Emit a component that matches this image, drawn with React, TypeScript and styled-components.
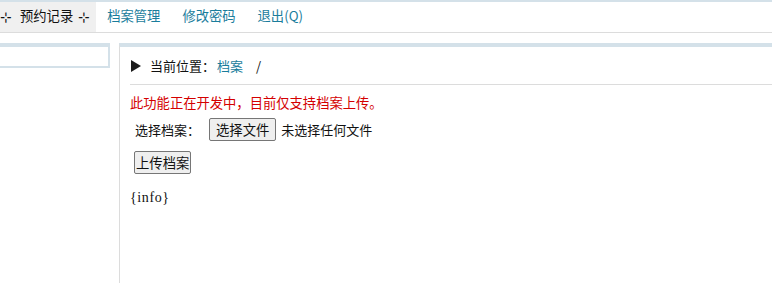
import React from "react";
import styled, { createGlobalStyle } from "styled-components";

const GlobalStyle = createGlobalStyle`
  html, body {
    margin: 0;
    padding: 0;
    background: #fff;
  }
  body {
    font-family: "Noto Sans CJK SC", "Noto Sans", sans-serif;
    font-size: 13px;
    color: #111;
  }
`;

const Page = styled.div`
  width: 772px;
  height: 283px;
  overflow: hidden;
  display: flex;
  flex-direction: column;
`;

const NavBar = styled.nav`
  display: flex;
  align-items: stretch;
  height: 30px;
  border-top: 2px solid #d4e1e9;
  border-bottom: 1px solid #dcdcdc;
`;

const NavItem = styled.a<{ $active?: boolean }>`
  display: flex;
  align-items: center;
  padding: ${(p) => (p.$active ? "0 6px 3px 0" : "0 11px 3px")};
  background: ${(p) => (p.$active ? "#f0f0f0" : "transparent")};
  color: ${(p) => (p.$active ? "#111" : "#1a7d9c")};
  font-size: 13.3px;
  text-decoration: none;
  white-space: pre;
  cursor: pointer;
`;

const Star = styled.span`
  font-size: 14px;
  margin: 0 8px 0 0;

  &:last-child {
    margin: 0 0 0 5px;
  }
`;

const Body = styled.div`
  flex: 1;
  display: flex;
  align-items: flex-start;
  gap: 9px;
  margin-top: 10px;
  min-height: 0;
`;

const SideBox = styled.div`
  width: 108px;
  height: 19px;
  border: 2px solid #d4e1e9;
  border-top-width: 4px;
  border-left: 0;
`;

const Main = styled.section`
  flex: 1;
  align-self: stretch;
  border-top: 4px solid #d4e1e9;
  border-left: 1px solid #dcdcdc;
  padding-left: 10px;
`;

const Crumb = styled.div`
  display: flex;
  align-items: center;
  height: 37px;
  padding-left: 1px;
  gap: 9px;
  border-bottom: 1px solid #dcdcdc;
`;

const Arrow = styled.span`
  width: 0;
  height: 0;
  border-top: 6px solid transparent;
  border-bottom: 6px solid transparent;
  border-left: 10px solid #1c1c1c;
`;

const CrumbLink = styled.a`
  color: #1a7d9c;
  margin: 0 13px 0 2px;
  text-decoration: none;
`;

const Notice = styled.p`
  margin: 9px 0 0;
  color: #d40000;
  font-size: 13.3px;
  line-height: 18px;
`;

const FieldRow = styled.div`
  display: flex;
  align-items: center;
  margin-top: 6px;
  padding-left: 5px;
`;

const FieldLabel = styled.span`
  width: 74px;
`;

const NativeButton = styled.button<{ $tight?: boolean }>`
  font-family: "Noto Sans CJK SC", "Noto Sans", sans-serif;
  font-size: 13.33px;
  color: #111;
  background: #efefef;
  border: 1px solid #767676;
  border-radius: 2px;
  padding: ${(p) => (p.$tight ? "1px 1px" : "1px 6px")};
  line-height: 19px;
  cursor: pointer;
`;

const FileName = styled.span`
  margin-left: 5px;
`;

const UploadRow = styled.div`
  margin-top: 10px;
  padding-left: 4px;
`;

const Info = styled.div`
  margin-top: 16px;
  font-family: "Liberation Serif", "DejaVu Serif", serif;
  font-size: 14px;
  letter-spacing: 0.6px;
`;

export default function App() {
  return (
    <Page>
      <GlobalStyle />
      <NavBar>
        <NavItem $active>
          <Star>⊹</Star>预约记录<Star>⊹</Star>
        </NavItem>
        <NavItem>档案管理</NavItem>
        <NavItem>修改密码</NavItem>
        <NavItem>退出(Q)</NavItem>
      </NavBar>
      <Body>
        <SideBox />
        <Main>
          <Crumb>
            <Arrow />
            <span>
              当前位置：<CrumbLink>档案</CrumbLink>/
            </span>
          </Crumb>
          <Notice>此功能正在开发中，目前仅支持档案上传。</Notice>
          <FieldRow>
            <FieldLabel>选择档案：</FieldLabel>
            <NativeButton>选择文件</NativeButton>
            <FileName>未选择任何文件</FileName>
          </FieldRow>
          <UploadRow>
            <NativeButton $tight>上传档案</NativeButton>
          </UploadRow>
          <Info>{"{info}"}</Info>
        </Main>
      </Body>
    </Page>
  );
}
